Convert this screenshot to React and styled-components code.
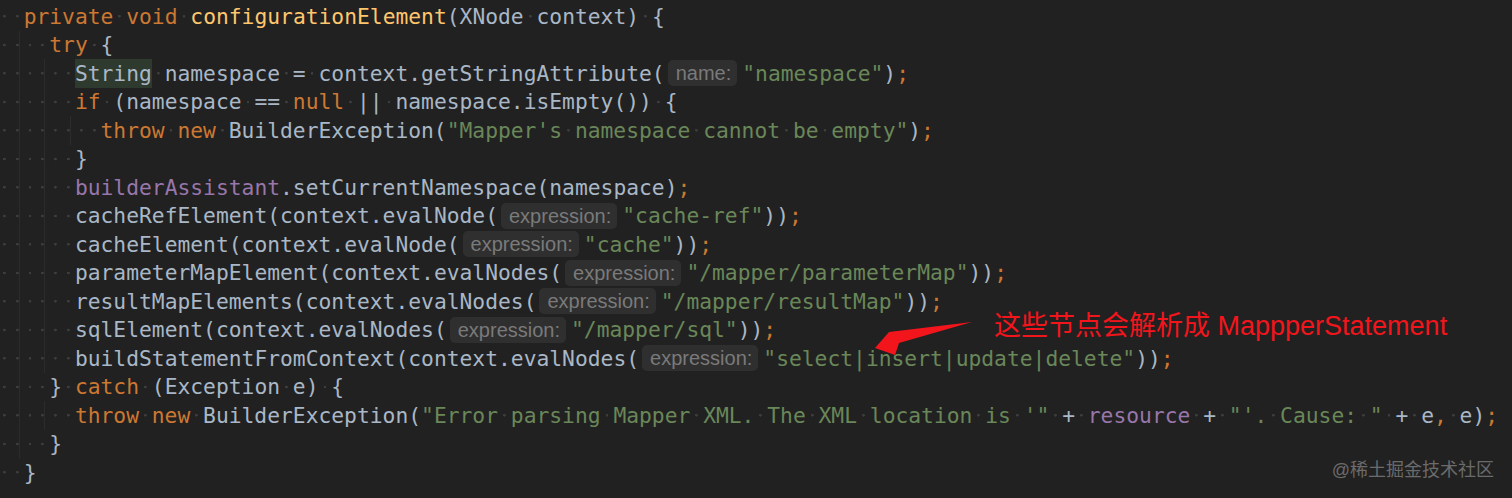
import React from "react";
import styled, { createGlobalStyle } from "styled-components";

const GlobalStyle = createGlobalStyle`
  html, body {
    margin: 0;
    padding: 0;
    background: #212121;
  }
  body {
    width: 1512px;
    height: 498px;
    overflow: hidden;
  }
`;

// token kinds: k keyword, f method decl, d default, s string, v field, h inlay hint, m marked word
const lines = [
  [0, [["k", "private"], ["d", " "], ["k", "void"], ["d", " "], ["f", "configurationElement"], ["d", "(XNode context) {"]]],
  [1, [["k", "try"], ["d", " {"]]],
  [2, [["m", "String"], ["d", " namespace = context.getStringAttribute("], ["h", "name:"], ["s", '"namespace"'], ["d", ")"], ["k", ";"]]],
  [2, [["k", "if"], ["d", " (namespace == "], ["k", "null"], ["d", " || namespace.isEmpty()) {"]]],
  [3, [["k", "throw new"], ["d", " BuilderException("], ["s", "\"Mapper's namespace cannot be empty\""], ["d", ")"], ["k", ";"]]],
  [2, [["d", "}"]]],
  [2, [["v", "builderAssistant"], ["d", ".setCurrentNamespace(namespace)"], ["k", ";"]]],
  [2, [["d", "cacheRefElement(context.evalNode("], ["h", "expression:"], ["s", '"cache-ref"'], ["d", "))"], ["k", ";"]]],
  [2, [["d", "cacheElement(context.evalNode("], ["h", "expression:"], ["s", '"cache"'], ["d", "))"], ["k", ";"]]],
  [2, [["d", "parameterMapElement(context.evalNodes("], ["h", "expression:"], ["s", '"/mapper/parameterMap"'], ["d", "))"], ["k", ";"]]],
  [2, [["d", "resultMapElements(context.evalNodes("], ["h", "expression:"], ["s", '"/mapper/resultMap"'], ["d", "))"], ["k", ";"]]],
  [2, [["d", "sqlElement(context.evalNodes("], ["h", "expression:"], ["s", '"/mapper/sql"'], ["d", "))"], ["k", ";"]]],
  [2, [["d", "buildStatementFromContext(context.evalNodes("], ["h", "expression:"], ["s", '"select|insert|update|delete"'], ["d", "))"], ["k", ";"]]],
  [1, [["d", "} "], ["k", "catch"], ["d", " (Exception e) {"]]],
  [2, [["k", "throw new"], ["d", " BuilderException("], ["s", "\"Error parsing Mapper XML. The XML location is '\""], ["d", " + "], ["v", "resource"], ["d", " + "], ["s", "\"'. Cause: \""], ["d", " + e"], ["k", ","], ["d", " e)"], ["k", ";"]]],
  [1, [["d", "}"]]],
  [0, [["d", "}"]]],
];

const colors = {
  k: "#cc7832",
  f: "#ffc66d",
  d: "#a9b7c6",
  s: "#6a8759",
  v: "#9876aa",
  m: "#a9b7c6",
};

const Editor = styled.div`
  position: relative;
  width: 1512px;
  height: 498px;
  padding-top: 2px;
  box-sizing: border-box;
  font-family: "DejaVu Sans Mono", "Liberation Mono", monospace;
  font-size: 21.3px;
`;

const Code = styled.div`
  margin-left: -3px;
`;

const Line = styled.div`
  display: flex;
  align-items: center;
  height: 28.5px;
  white-space: pre;
`;

const Space = styled.span`
  display: inline-block;
  width: 1ch;
  height: 100%;
  background: radial-gradient(circle, #3c3c3c 1.1px, transparent 1.6px) center / 100% 100% no-repeat;
`;

const Indent = styled.span`
  display: flex;
  align-self: stretch;
  border-left: 1px solid ${(p) => (p.$guide ? "#2c2c2c" : "transparent")};
  margin-left: ${(p) => (p.$guide ? "-5px" : "0")};
  padding-left: ${(p) => (p.$guide ? "4px" : "0")};
`;

const Token = styled.span`
  display: flex;
  align-items: center;
  color: ${(p) => colors[p.$kind]};
  ${(p) =>
    p.$kind === "m" &&
    `
    align-self: stretch;
    background: #2e3a2e;
  `}
`;

const Hint = styled.span`
  height: 26px;
  line-height: 26px;
  margin: 0 5px 0 3px;
  padding: 0 6px 0 8px;
  border-radius: 5px;
  background: #2f2f2f;
  color: #7a7a7a;
  font-family: "Liberation Sans", Arial, sans-serif;
  font-size: 20px;
`;

const Note = styled.div`
  position: absolute;
  left: 994px;
  top: 311px;
  color: #f2151c;
  font-family: "Liberation Sans", "Noto Sans CJK SC", sans-serif;
  font-size: 27px;
  line-height: 30px;
  white-space: nowrap;
`;

const Arrow = styled.svg`
  position: absolute;
  left: 860px;
  top: 315px;
`;

const Watermark = styled.div`
  position: absolute;
  right: 18px;
  top: 458px;
  color: #6b6b6b;
  font-family: "Liberation Sans", "Noto Sans CJK SC", sans-serif;
  font-size: 18px;
  line-height: 24px;
`;

const renderText = (text, kind, key) => {
  const parts = text.split(" ");
  const out = [];
  parts.forEach((part, i) => {
    if (i > 0) out.push(<Space key={`${key}-s${i}`} />);
    if (part) {
      out.push(
        <Token key={`${key}-t${i}`} $kind={kind}>
          {part}
        </Token>
      );
    }
  });
  return out;
};

const CodeLine = ({ level, tokens }) => (
  <Line>
    <Indent>
      <Space />
      <Space />
    </Indent>
    {Array.from({ length: level }).map((_, i) => (
      <Indent key={i} $guide>
        <Space />
        <Space />
      </Indent>
    ))}
    {tokens.map(([kind, text], i) =>
      kind === "h" ? (
        <Hint key={i}>{text}</Hint>
      ) : kind === "m" ? (
        <Token key={i} $kind="m">
          {text}
        </Token>
      ) : (
        renderText(text, kind, i)
      )
    )}
  </Line>
);

const App = () => (
  <>
    <GlobalStyle />
    <Editor>
      <Code>
        {lines.map(([level, tokens], i) => (
          <CodeLine key={i} level={level} tokens={tokens} />
        ))}
      </Code>
      <Arrow width="120" height="50" viewBox="0 0 120 50">
        <polygon points="112,7 29,17 15,33 35,40 39,28" fill="#f2151c" />
      </Arrow>
      <Note>这些节点会解析成 MappperStatement</Note>
      <Watermark>@稀土掘金技术社区</Watermark>
    </Editor>
  </>
);

export default App;
